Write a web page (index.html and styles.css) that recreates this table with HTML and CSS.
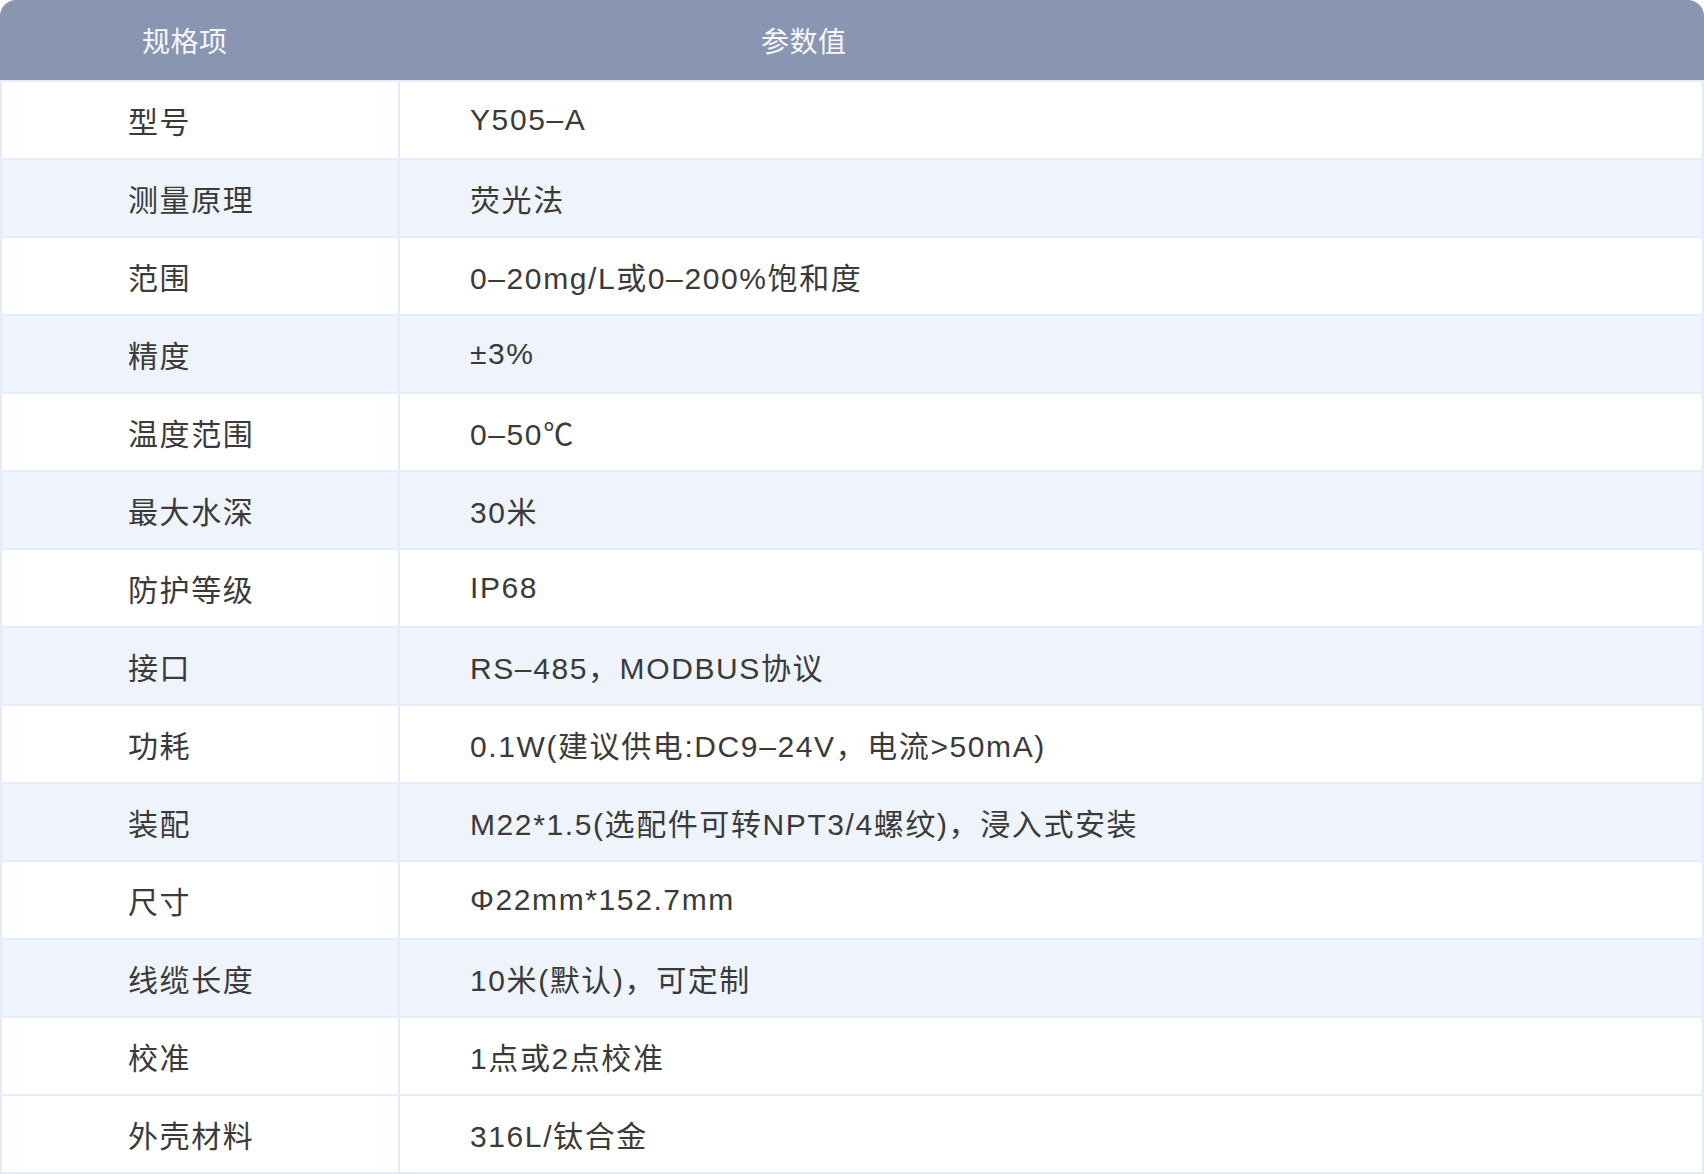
FILE: index.html
```html
<!DOCTYPE html>
<html lang="zh-CN">
<head>
<meta charset="utf-8">
<title>规格参数</title>
<link rel="stylesheet" href="styles.css">
</head>
<body>
<div class="spec">
  <div class="spec-head">
    <span class="head-key">规格项</span>
    <span class="head-val">参数值</span>
  </div>
  <table class="spec-table">
    <tbody>
      <tr><td class="key">型号</td><td class="val">Y505–A</td></tr>
      <tr class="alt"><td class="key">测量原理</td><td class="val">荧光法</td></tr>
      <tr><td class="key">范围</td><td class="val">0–20mg/L或0–200%饱和度</td></tr>
      <tr class="alt"><td class="key">精度</td><td class="val">±3%</td></tr>
      <tr><td class="key">温度范围</td><td class="val">0–50℃</td></tr>
      <tr class="alt"><td class="key">最大水深</td><td class="val">30米</td></tr>
      <tr><td class="key">防护等级</td><td class="val">IP68</td></tr>
      <tr class="alt"><td class="key">接口</td><td class="val">RS–485，MODBUS协议</td></tr>
      <tr><td class="key">功耗</td><td class="val">0.1W(建议供电:DC9–24V，电流&gt;50mA)</td></tr>
      <tr class="alt"><td class="key">装配</td><td class="val">M22*1.5(选配件可转NPT3/4螺纹)，浸入式安装</td></tr>
      <tr><td class="key">尺寸</td><td class="val">Φ22mm*152.7mm</td></tr>
      <tr class="alt"><td class="key">线缆长度</td><td class="val">10米(默认)，可定制</td></tr>
      <tr><td class="key">校准</td><td class="val">1点或2点校准</td></tr>
      <tr><td class="key">外壳材料</td><td class="val">316L/钛合金</td></tr>
    </tbody>
  </table>
</div>
</body>
</html>
```

FILE: styles.css
```css
html, body {
  margin: 0;
  padding: 0;
  background: #ffffff;
}

.spec {
  width: 1704px;
  font-family: "Liberation Sans", "Noto Sans CJK SC", sans-serif;
}

.spec-head {
  display: flex;
  align-items: center;
  height: 80px;
  padding-left: 142px;
  background: #8a95b2;
  border-radius: 16px 16px 0 0;
  color: #f5f7fb;
  font-size: 28px;
  letter-spacing: 0.5px;
}

.head-key {
  width: 619px;
}

.spec-table {
  width: 1704px;
  border-collapse: collapse;
  table-layout: fixed;
}

.spec-table td {
  height: 76px;
  padding: 0;
  border: 2px solid #e4ecfa;
  background: #ffffff;
  color: #3a3a3a;
  font-size: 30px;
  letter-spacing: 1.6px;
  vertical-align: middle;
  white-space: nowrap;
}

.spec-table tr.alt td {
  background: #eef3fc;
}

.spec-table .key {
  width: 270px;
  padding-left: 126px;
}

.spec-table .val {
  padding-left: 70px;
}
```
